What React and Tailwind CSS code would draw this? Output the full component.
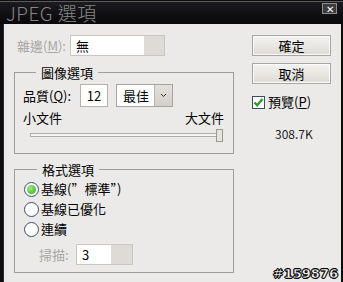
import React from "react";

const font = { fontFamily: '"Noto Sans CJK TC", "Noto Sans", sans-serif' };

const Radio = ({ checked, label }) => (
  <div className="flex items-center h-[20px] overflow-hidden">
    <div className="w-[15px] h-[15px] rounded-full border border-[#3a4f66] bg-white flex items-center justify-center">
      {checked && (
        <div className="w-[9px] h-[9px] rounded-full bg-[radial-gradient(circle_at_35%_35%,#9ef07a,#2fa523)]" />
      )}
    </div>
    <span className="ml-[2px] text-[13px] text-black leading-[16px]">{label}</span>
  </div>
);

const App = () => {
  return (
    <div
      className="w-[343px] h-[282px] bg-[#0d0d10] flex flex-col overflow-hidden relative"
      style={font}
    >
      {/* title bar */}
      <div className="h-[23px] border-t border-[#5a5a5a] mt-[1px] bg-[linear-gradient(#1b1b20,#08080a)] flex items-start justify-between pl-[6px] pr-[6px]">
        <span className="text-[19px] leading-[22px] text-[#858585] font-light tracking-[0.5px]">
          JPEG 選項
        </span>
        <div className="mt-[1px] w-[15px] h-[11px] border border-[#8c8c8c] bg-[#3b3b40] flex items-center justify-center text-white text-[10px] leading-none">
          ✕
        </div>
      </div>

      {/* body */}
      <div className="flex-1 mx-[3px] mr-[2px] border-l border-[#2a2a2a] bg-[#ECEAE8] flex">
        {/* left column */}
        <div className="w-[237px] pl-[10px] pt-[11px]">
          <div className="flex items-center h-[21px]">
            <span className="ml-[3px] w-[53px] text-[13px] text-[#a9a7a5]">雜邊(<u>M</u>):</span>
            <div className="w-[95px] h-[21px] border border-[#c9c7c4] flex">
              <div className="flex-1 bg-white flex items-center pl-[5px] text-[13px] text-black">無</div>
              <div className="w-[20px] bg-[#dedbd7]" />
            </div>
          </div>

          <fieldset className="mt-[9px] w-[220px] h-[89px] border border-[#9e9e9e] px-[8px] pb-0">
            <legend className="ml-[13px] px-[5px] text-[13px] leading-[15px] text-black">圖像選項</legend>
            <div className="flex items-center mt-[4px] h-[23px]">
              <span className="text-[13px] text-black w-[57px]">品質(<u>Q</u>):</span>
              <div className="w-[28px] h-[23px] border border-[#b5b3b0] bg-white flex items-center justify-center text-[13px] text-black">
                12
              </div>
              <div className="ml-[8px] w-[57px] h-[23px] border border-[#a7a5a2] bg-white flex">
                <div className="flex-1 flex items-center pl-[6px] text-[13px] text-black">最佳</div>
                <div className="w-[18px] bg-[linear-gradient(#e4e1dd,#d2cec8)] border-l border-[#b8b5b1] flex items-center justify-center">
                  <svg width="7" height="5" viewBox="0 0 7 5">
                    <path d="M1 1 L3.5 3.5 L6 1" fill="none" stroke="#333" strokeWidth="1" />
                  </svg>
                </div>
              </div>
            </div>
            <div className="flex justify-between mt-[3px] text-[13px] leading-[16px] text-black">
              <span>小文件</span>
              <span className="mr-[1px]">大文件</span>
            </div>
            <div className="relative mt-[3px] h-[12px] ml-[7px] mr-[2px]">
              <div className="absolute left-0 right-[4px] top-[4px] h-[4px] border border-[#b1aea9] bg-[#f6f5f3]" />
              <div className="absolute right-0 top-0 w-[7px] h-[13px] border border-[#9c9994] bg-[#e6e3df]" />
            </div>
          </fieldset>

          <fieldset className="mt-[8px] w-[220px] h-[111px] border border-[#9e9e9e] pl-[9px] pb-0">
            <legend className="ml-[13px] px-[5px] text-[13px] leading-[15px] text-black">格式選項</legend>
            <div className="mt-[2px]">
              <Radio checked label={"基線(\u201d標準\u201d)"} />
              <Radio label="基線已優化" />
              <Radio label="連續" />
            </div>
            <div className="flex items-center mt-[5px] ml-[15px] h-[21px]">
              <span className="w-[37px] text-[13px] text-[#a9a7a5]">掃描:</span>
              <div className="w-[57px] h-[21px] border border-[#c9c7c4] flex">
                <div className="w-[34px] bg-white flex items-center pl-[5px] text-[13px] text-black">3</div>
                <div className="flex-1 bg-[#dedbd7]" />
              </div>
            </div>
          </fieldset>
        </div>

        {/* right column */}
        <div className="pl-[11px] pt-[11px] flex flex-col">
          <div className="w-[79px] h-[21px] border border-[#a8a6a3] bg-[linear-gradient(#f4f3f1,#dedbd6)] shadow-[inset_0_0_0_1px_#fafafa] flex items-center justify-center text-[13px] text-black">
            確定
          </div>
          <div className="mt-[7px] w-[79px] h-[21px] border border-[#a8a6a3] bg-[linear-gradient(#f4f3f1,#dedbd6)] shadow-[inset_0_0_0_1px_#fafafa] flex items-center justify-center text-[13px] text-black">
            取消
          </div>
          <div className="mt-[11px] flex items-center h-[14px]">
            <div className="w-[13px] h-[13px] border border-[#3a4f66] bg-white flex items-center justify-center">
              <svg width="11" height="11" viewBox="0 0 11 11">
                <path d="M1.5 5.5 L4.2 8.3 L9.5 2" fill="none" stroke="#2e9a27" strokeWidth="2.4" />
              </svg>
            </div>
            <span className="ml-[3px] text-[13px] text-black">預覽(<u>P</u>)</span>
          </div>
          <div className="mt-[18px] ml-[23px] text-[12px] leading-[14px] text-[#222]">308.7K</div>
        </div>
      </div>

      <div
        className="absolute right-[5px] bottom-[2px] text-[13px] font-bold text-white leading-none"
        style={{
          fontFamily: '"DejaVu Sans", sans-serif',
          WebkitTextStroke: "0.5px #000",
          textShadow: "1px 0 #000, -1px 0 #000, 0 1px #000, 0 -1px #000",
        }}
      >
        #159876
      </div>
    </div>
  );
};

export default App;
